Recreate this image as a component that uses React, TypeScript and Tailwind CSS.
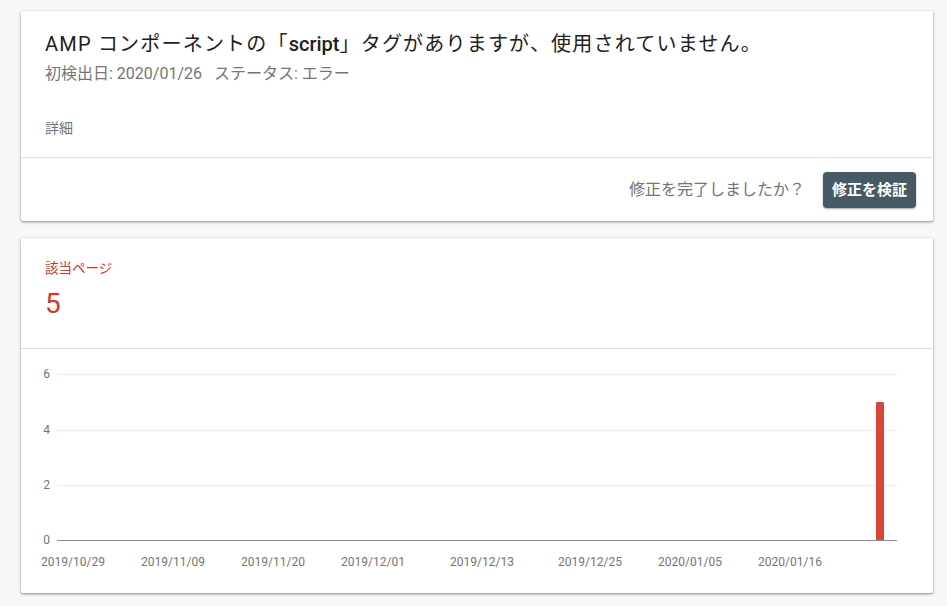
import React from 'react';

const yTicks = [
  { v: '6', y: 25 },
  { v: '4', y: 81 },
  { v: '2', y: 136 },
];

const xLabels = [
  { t: '2019/10/29', x: 52 },
  { t: '2019/11/09', x: 152 },
  { t: '2019/11/20', x: 252 },
  { t: '2019/12/01', x: 352 },
  { t: '2019/12/13', x: 461 },
  { t: '2019/12/25', x: 569 },
  { t: '2020/01/05', x: 669 },
  { t: '2020/01/16', x: 769 },
];

const Chart = () => {
  return (
    <svg width="912" height="244" className="block" fontFamily="Roboto, 'Noto Sans CJK JP', sans-serif">
      {yTicks.map((t) => (
        <g key={t.v}>
          <line x1="36" x2="876" y1={t.y + 0.5} y2={t.y + 0.5} stroke="#ececec" strokeWidth="1" />
          <text x="29" y={t.y + 4} fontSize="12" fill="#757575" textAnchor="end">{t.v}</text>
        </g>
      ))}
      <line x1="36" x2="876" y1="191.5" y2="191.5" stroke="#8a8a8a" strokeWidth="1" />
      <text x="29" y="195" fontSize="12" fill="#757575" textAnchor="end">0</text>
      {xLabels.map((l) => (
        <text key={l.t} x={l.x} y="217" fontSize="12" fill="#757575" textAnchor="middle">{l.t}</text>
      ))}
      <rect x="855" y="53" width="8" height="138" rx="1" fill="#db4437" />
    </svg>
  );
};

export default function App() {
  return (
    <div className="min-h-[606px] bg-[#f8f8f8] pl-[21px] pr-[14px] pt-[11px] pb-[13px] font-['Roboto','Noto_Sans_CJK_JP',sans-serif]">
      <div className="bg-white rounded-[2px] shadow-[0_1px_2px_rgba(0,0,0,0.3),0_1px_3px_1px_rgba(0,0,0,0.12)]">
        <div className="px-6 pt-[19px] h-[146px]">
          <h1 className="text-[20px] leading-[28px] tracking-[1.2px] text-[#212121]">
            AMP コンポーネントの「<span className="font-medium tracking-normal">script</span>」タグがありますが、使用されていません。
          </h1>
          <p className="mt-[5px] text-[16px] leading-[22px] text-[#757575]">
            初検出日: 2020/01/26<span className="ml-[12px]">ステータス: エラー</span>
          </p>
          <p className="mt-[33px] text-[14px] leading-[20px] text-[#757575]">詳細</p>
        </div>
        <div className="border-t border-[#e0e0e0] flex items-center justify-end gap-[18px] pr-[17px] pt-[14px] pb-[13px]">
          <span className="text-[16px] text-[#757575]">修正を完了しましたか？</span>
          <button className="h-[36px] px-[9px] rounded-[4px] bg-[#455a64] text-white text-[15px] font-bold shadow-[0_1px_2px_rgba(0,0,0,0.35)]">
            修正を検証
          </button>
        </div>
      </div>

      <div className="mt-[17px] bg-white rounded-[2px] shadow-[0_1px_2px_rgba(0,0,0,0.3),0_1px_3px_1px_rgba(0,0,0,0.12)]">
        <div className="px-6 pt-[21px] h-[110px]">
          <p className="text-[13.5px] leading-[18px] text-[#d0392b]">該当ページ</p>
          <p className="mt-[9px] text-[28px] leading-[36px] text-[#d0392b]">5</p>
        </div>
        <div className="border-t border-[#e0e0e0]">
          <Chart />
        </div>
      </div>
    </div>
  );
}
